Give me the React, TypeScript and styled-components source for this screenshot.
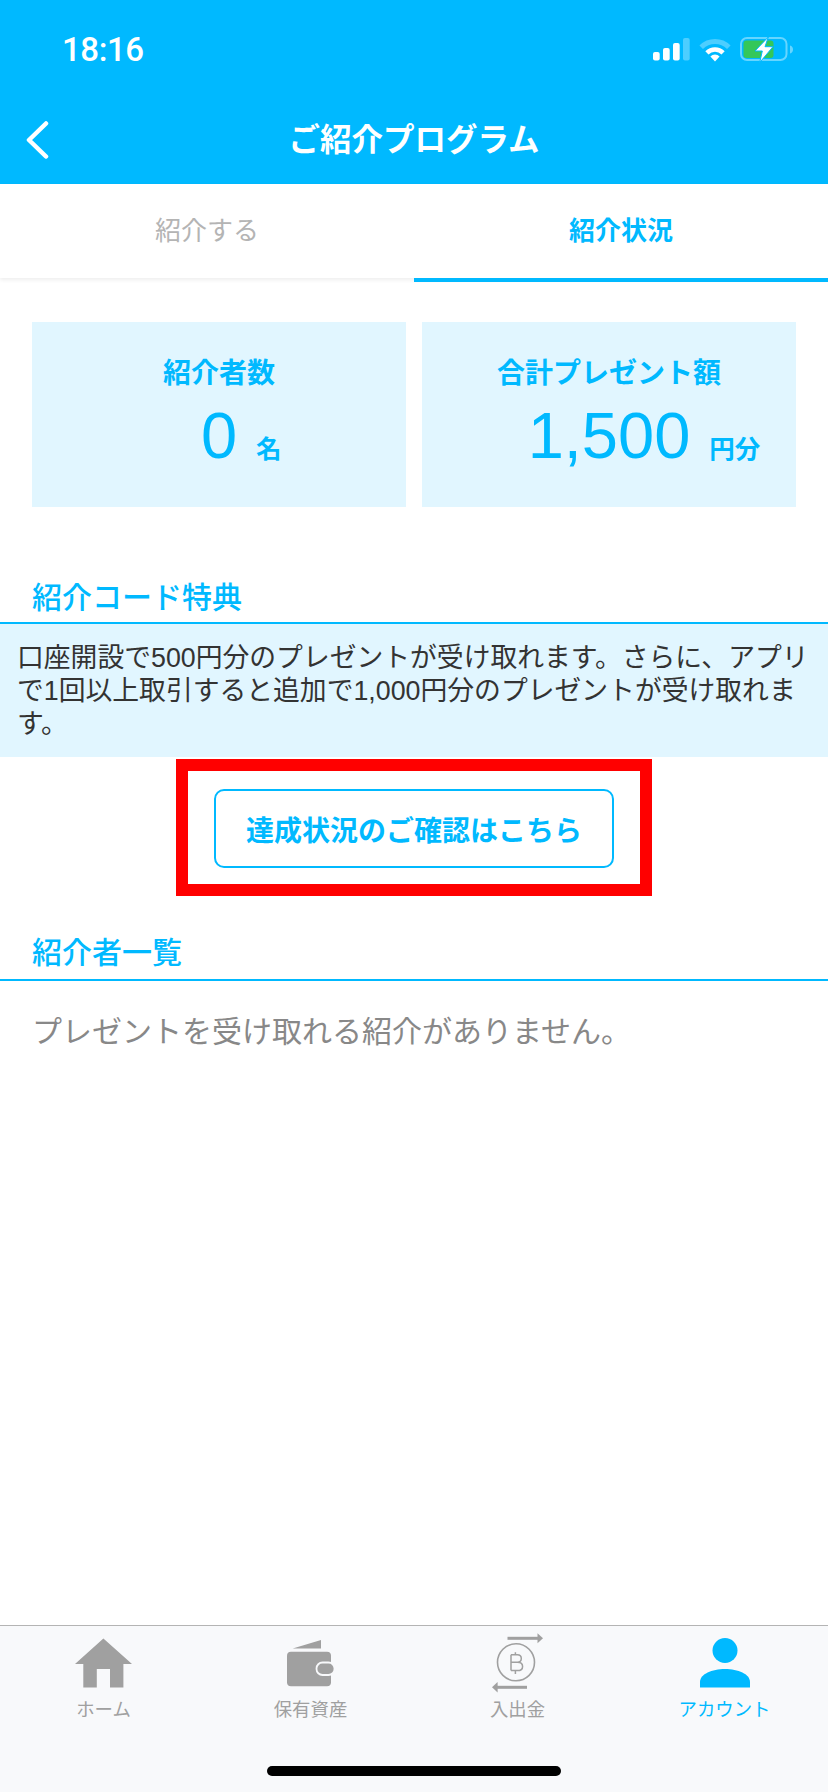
import React from "react";
import styled, { createGlobalStyle } from "styled-components";

const BLUE = "#00b9ff";
const PALE = "#e1f6ff";
const FONT = `"Liberation Sans", "Noto Sans CJK JP", sans-serif`;

const Global = createGlobalStyle`
  html, body { margin: 0; padding: 0; background: #fff; }
  * { box-sizing: border-box; }
  body { font-family: ${FONT}; }
`;

const Page = styled.div`
  width: 828px;
  height: 1792px;
  display: flex;
  flex-direction: column;
  overflow: hidden;
  background: #fff;
`;

const Header = styled.header`
  height: 184px;
  background: ${BLUE};
  color: #fff;
  display: flex;
  flex-direction: column;
`;

const StatusBar = styled.div`
  height: 99px;
  padding: 0 34px 0 62px;
  display: flex;
  align-items: center;
  justify-content: space-between;
`;

const Time = styled.span`
  font-family: Roboto, "Liberation Sans", sans-serif;
  font-size: 33px;
  font-weight: 500;
  letter-spacing: -0.4px;
`;

const StatusIcons = styled.div`
  display: flex;
  align-items: center;
  gap: 9px;
`;

const NavBar = styled.div`
  height: 82px;
  display: grid;
  grid-template-columns: 1fr auto 1fr;
  align-items: center;
`;

const BackSlot = styled.div`
  padding-left: 25px;
  display: flex;
  align-items: center;
`;

const NavTitle = styled.h1`
  margin: 0;
  font-size: 31.5px;
  font-weight: 700;
  line-height: 40px;
`;

const Tabs = styled.nav`
  height: 94px;
  display: grid;
  grid-template-columns: 1fr 1fr;
  align-items: start;
  box-shadow: 0 2px 4px rgba(0, 0, 0, 0.07);
`;

const Tab = styled.div<{ $active?: boolean }>`
  height: ${(p) => (p.$active ? 98 : 94)}px;
  display: flex;
  align-items: center;
  justify-content: center;
  padding-bottom: 6px;
  font-size: 26px;
  font-weight: ${(p) => (p.$active ? 700 : 400)};
  color: ${(p) => (p.$active ? BLUE : "#b4b4b4")};
  border-bottom: ${(p) => (p.$active ? `4px solid ${BLUE}` : "none")};
  background: #fff;
`;

const Content = styled.main`
  flex: 1;
  display: flex;
  flex-direction: column;
  padding-top: 44px;
`;

const Cards = styled.section`
  display: grid;
  grid-template-columns: 374px 374px;
  gap: 16px;
  padding: 0 32px;
`;

const Card = styled.div`
  height: 185px;
  background: ${PALE};
  color: ${BLUE};
  display: flex;
  flex-direction: column;
  align-items: center;
  padding-top: 33px;
`;

const CardLabel = styled.div`
  font-size: 28px;
  font-weight: 700;
  line-height: 38px;
`;

const ValueRow = styled.div`
  width: 100%;
  margin-top: 5px;
  display: grid;
  grid-template-columns: 1fr auto 1fr;
  column-gap: 19px;
  align-items: baseline;
`;

const Value = styled.span`
  grid-column: 2;
  font-size: 65px;
  line-height: 76px;
`;

const Unit = styled.span`
  font-size: 25.5px;
  font-weight: 700;
`;

const SectionTitle = styled.h2<{ $top: number; $under: number }>`
  margin: ${(p) => p.$top}px 0 0;
  padding: 0 32px ${(p) => p.$under}px;
  font-size: 30px;
  font-weight: 500;
  line-height: 46px;
  color: ${BLUE};
  border-bottom: 2px solid ${BLUE};
`;

const Notice = styled.p`
  margin: 0;
  height: 133px;
  padding: 18px 8px 0 17px;
  background: ${PALE};
  color: #333;
  font-size: 26.8px;
  line-height: 33px;
`;

const ButtonArea = styled.div`
  display: flex;
  justify-content: center;
  margin-top: 2px;
`;

const Highlight = styled.div`
  width: 476px;
  height: 137px;
  padding-top: 2px;
  border: 12px solid #ff0000;
  display: flex;
  align-items: center;
  justify-content: center;
`;

const ConfirmButton = styled.button`
  width: 400px;
  height: 79px;
  padding: 0;
  background: #fff;
  border: 2px solid ${BLUE};
  border-radius: 10px;
  color: ${BLUE};
  font-family: ${FONT};
  font-size: 28px;
  font-weight: 700;
`;

const EmptyText = styled.p`
  margin: 31px 0 0;
  padding: 0 32px;
  color: #888;
  font-size: 30px;
  line-height: 40px;
`;

const TabBar = styled.footer`
  height: 167px;
  background: #f8f9fb;
  border-top: 1px solid #b4b4b4;
  display: flex;
  flex-direction: column;
`;

const TabItems = styled.div`
  display: grid;
  grid-template-columns: repeat(4, 1fr);
  height: 140px;
`;

const TabItem = styled.div<{ $active?: boolean }>`
  display: flex;
  flex-direction: column;
  align-items: center;
  color: ${(p) => (p.$active ? BLUE : "#a0a0a0")};
`;

const IconSlot = styled.div`
  height: 69px;
  padding-top: 5px;
  display: flex;
  align-items: center;
  justify-content: center;
`;

const TabLabel = styled.span`
  font-size: 18.4px;
  line-height: 30px;
`;

const HomeIndicator = styled.div`
  width: 294px;
  height: 10px;
  margin: 0 auto;
  border-radius: 5px;
  background: #000;
`;

const Signal = () => (
  <svg width="37" height="23" viewBox="0 0 37 23" fill="#fff">
    <rect x="0" y="14" width="6.7" height="8.6" rx="2" />
    <rect x="10" y="10" width="6.7" height="12.6" rx="2" />
    <rect x="20" y="5" width="6.7" height="17.6" rx="2" />
    <rect x="30" y="0" width="6.7" height="22.6" rx="2" opacity="0.3" />
  </svg>
);

const Wifi = () => (
  <svg width="32" height="24" viewBox="0 0 32 24" fill="none" stroke="#fff">
    <path d="M2.2 9.2A19.5 19.5 0 0 1 29.8 9.2" strokeWidth="5" opacity="0.3" />
    <path d="M7.9 14.9A11.5 11.5 0 0 1 24.1 14.9" strokeWidth="4.5" />
    <path d="M16 23.4L11.4 18.4A6.5 6.5 0 0 1 20.6 18.4Z" fill="#fff" stroke="none" />
  </svg>
);

const Battery = () => (
  <svg width="54" height="26" viewBox="0 0 54 26">
    <rect x="1" y="1" width="45.5" height="22" rx="6" fill="none" stroke="#fff" strokeOpacity="0.4" strokeWidth="2" />
    <rect x="3.5" y="3.5" width="30" height="17.5" rx="3" fill="#34c759" />
    <path d="M50 8.5C52 9 53 10.5 53 12.5S52 16 50 16.5Z" fill="#fff" fillOpacity="0.4" />
    <path d="M28.3 0L15 14H22.3L19.7 25.5L33 9.7H25Z" fill="#fff" stroke={BLUE} strokeWidth="1" />
  </svg>
);

const Back = () => (
  <svg width="24" height="38" viewBox="0 0 24 38" fill="none" stroke="#fff" strokeWidth="4.5" strokeLinecap="round" strokeLinejoin="round">
    <path d="M21 2.5L4 19L21 35.5" />
  </svg>
);

const HomeIcon = () => (
  <svg width="57" height="50" viewBox="0 0 57 50" fill="currentColor">
    <path d="M28.4 0.6L57 26H48.4V49.4H35V31H21.8V49.4H8.3V26H0Z" />
  </svg>
);

const WalletIcon = () => (
  <svg width="48" height="47" viewBox="0 0 48 47">
    <path d="M5.7 8.4L34 0V8.4Z" fill="currentColor" />
    <rect x="0" y="11.7" width="44" height="34.5" rx="4" fill="currentColor" />
    <rect x="29.5" y="22.5" width="18" height="12.5" rx="6" fill="currentColor" stroke="#f8f9fb" strokeWidth="1.8" />
  </svg>
);

const TransferIcon = () => (
  <svg width="52" height="60" viewBox="0 0 52 60" fill="currentColor">
    <rect x="15.5" y="3.8" width="31" height="3" />
    <path d="M45.5 0.3L51 5.3L45.5 10.3Z" />
    <rect x="5" y="52.8" width="30" height="3" />
    <path d="M5.6 49L0 54.3L5.6 59.5Z" />
    <circle cx="24" cy="29.3" r="18.5" fill="none" stroke="currentColor" strokeWidth="1.6" />
    <path
      d="M19 21.8V37.6M19 21.8H25.4C28 21.8 29.3 23.4 29.3 25.6C29.3 27.8 28 29.2 25.4 29.2H19M25.4 29.2C28.6 29.2 30.6 30.8 30.6 33.4C30.6 36 28.6 37.6 25.4 37.6H19M23.4 19.3V21.8M23.4 37.6V41"
      fill="none"
      stroke="currentColor"
      strokeWidth="1.5"
    />
  </svg>
);

const PersonIcon = () => (
  <svg width="50" height="50" viewBox="0 0 50 50" fill="currentColor">
    <circle cx="25" cy="12.5" r="12.5" />
    <path d="M0 49.5V44C0 36 12 31 25 31C38 31 50 36 50 44V49.5Z" />
  </svg>
);

export default function App() {
  return (
    <Page>
      <Global />
      <Header>
        <StatusBar>
          <Time>18:16</Time>
          <StatusIcons>
            <Signal />
            <Wifi />
            <Battery />
          </StatusIcons>
        </StatusBar>
        <NavBar>
          <BackSlot><Back /></BackSlot>
          <NavTitle>ご紹介プログラム</NavTitle>
        </NavBar>
      </Header>
      <Tabs>
        <Tab>紹介する</Tab>
        <Tab $active>紹介状況</Tab>
      </Tabs>
      <Content>
        <Cards>
          <Card>
            <CardLabel>紹介者数</CardLabel>
            <ValueRow>
              <Value>0</Value>
              <Unit>名</Unit>
            </ValueRow>
          </Card>
          <Card>
            <CardLabel>合計プレゼント額</CardLabel>
            <ValueRow>
              <Value>1,500</Value>
              <Unit>円分</Unit>
            </ValueRow>
          </Card>
        </Cards>
        <SectionTitle $top={68} $under={1}>紹介コード特典</SectionTitle>
        <Notice>
          口座開設で500円分のプレゼントが受け取れます。さらに、アプリで1回以上取引すると追加で1,000円分のプレゼントが受け取れます。
        </Notice>
        <ButtonArea>
          <Highlight>
            <ConfirmButton>達成状況のご確認はこちら</ConfirmButton>
          </Highlight>
        </ButtonArea>
        <SectionTitle $top={34} $under={3}>紹介者一覧</SectionTitle>
        <EmptyText>プレゼントを受け取れる紹介がありません。</EmptyText>
      </Content>
      <TabBar>
        <TabItems>
          <TabItem>
            <IconSlot><HomeIcon /></IconSlot>
            <TabLabel>ホーム</TabLabel>
          </TabItem>
          <TabItem>
            <IconSlot><WalletIcon /></IconSlot>
            <TabLabel>保有資産</TabLabel>
          </TabItem>
          <TabItem>
            <IconSlot><TransferIcon /></IconSlot>
            <TabLabel>入出金</TabLabel>
          </TabItem>
          <TabItem $active>
            <IconSlot><PersonIcon /></IconSlot>
            <TabLabel>アカウント</TabLabel>
          </TabItem>
        </TabItems>
        <HomeIndicator />
      </TabBar>
    </Page>
  );
}
